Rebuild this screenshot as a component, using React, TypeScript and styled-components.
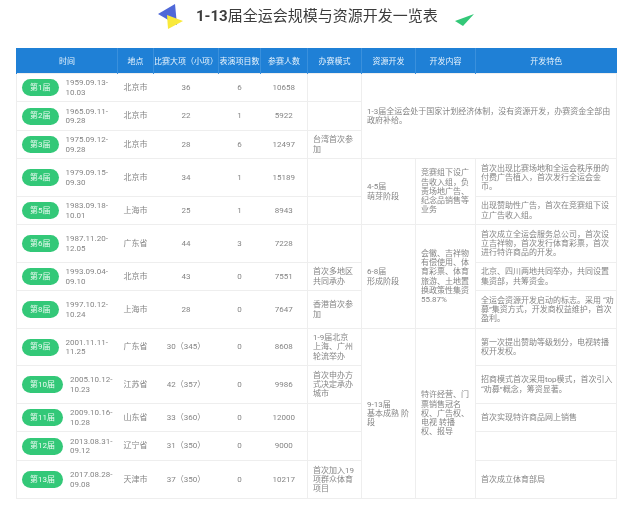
import React from 'react'
import styled, { createGlobalStyle } from 'styled-components'

const GlobalStyle = createGlobalStyle`
  html, body {
    margin: 0;
    padding: 0;
    background: #fff;
    font-family: Roboto, "Noto Sans CJK SC", sans-serif;
  }
`

type Session = {
  name: string
  date: string
  city: string
  events: string
  shows: number
  people: number
  mode?: string
  height: number
}

const sessions: Session[] = [
  { name: '第1届', date: '1959.09.13-10.03', city: '北京市', events: '36', shows: 6, people: 10658, height: 28 },
  { name: '第2届', date: '1965.09.11-09.28', city: '北京市', events: '22', shows: 1, people: 5922, height: 29 },
  { name: '第3届', date: '1975.09.12-09.28', city: '北京市', events: '28', shows: 6, people: 12497, mode: '台湾首次参加', height: 28 },
  { name: '第4届', date: '1979.09.15-09.30', city: '北京市', events: '34', shows: 1, people: 15189, height: 38 },
  { name: '第5届', date: '1983.09.18-10.01', city: '上海市', events: '25', shows: 1, people: 8943, height: 28 },
  { name: '第6届', date: '1987.11.20-12.05', city: '广东省', events: '44', shows: 3, people: 7228, height: 38 },
  { name: '第7届', date: '1993.09.04-09.10', city: '北京市', events: '43', shows: 0, people: 7551, mode: '首次多地区共同承办', height: 28 },
  { name: '第8届', date: '1997.10.12-10.24', city: '上海市', events: '28', shows: 0, people: 7647, mode: '香港首次参加', height: 38 },
  { name: '第9届', date: '2001.11.11-11.25', city: '广东省', events: '30（345）', shows: 0, people: 8608, mode: '1-9届北京上海、广州轮流举办', height: 37 },
  { name: '第10届', date: '2005.10.12-10.23', city: '江苏省', events: '42（357）', shows: 0, people: 9986, mode: '首次申办方式决定承办城市', height: 38 },
  { name: '第11届', date: '2009.10.16-10.28', city: '山东省', events: '33（360）', shows: 0, people: 12000, height: 28 },
  { name: '第12届', date: '2013.08.31-09.12', city: '辽宁省', events: '31（350）', shows: 0, people: 9000, height: 29 },
  { name: '第13届', date: '2017.08.28-09.08', city: '天津市', events: '37（350）', shows: 0, people: 10217, mode: '首次加入19项群众体育项目', height: 38 },
]

// rows 4-13 carry their own 开发特色 text
const features: Record<number, string> = {
  3: '首次出现比赛场地和全运会秩序册的付费广告植入，首次发行全运会金币。',
  4: '出现赞助性广告，首次在竞赛组下设立广告收入组。',
  5: '首次成立全运会服务总公司，首次设立吉祥物，首次发行体育彩票，首次进行特许商品的开发。',
  6: '北京、四川两地共同举办，共同设置集资部，共筹资金。',
  7: '全运会资源开发启动的标志。采用 “劝募”集资方式，开发商权益维护，首次盈利。',
  8: '第一次提出赞助等级划分，电视转播权开发权。',
  9: '招商模式首次采用top模式，首次引入 “劝募”概念，筹资显著。',
  10: '首次实现特许商品网上销售',
  11: '',
  12: '首次成立体育部局',
}

// stages start at a row and span several rows
const stages: Record<number, { span: number; stage: string[]; content: string }> = {
  3: { span: 2, stage: ['4-5届', '萌芽阶段'], content: '竞赛组下设广告收入组，负责场地广告、纪念品销售等业务' },
  5: { span: 3, stage: ['6-8届', '形成阶段'], content: '会徽、吉祥物有偿使用、体育彩票、体育旅游、土地置换政策性集资55.87%' },
  8: { span: 5, stage: ['9-13届', '基本成熟 阶段'], content: '特许经营、门票销售冠名权、广告权、电视 转播权、报导' },
}

const columns = [101, 36, 65, 42, 47, 54, 54, 60, 141]
const headers = ['时间', '地点', '比赛大项（小项）', '表演项目数', '参赛人数', '办赛模式', '资源开发', '开发内容', '开发特色']

const Page = styled.div`
  width: 641px;
  height: 508px;
  overflow: hidden;
  filter: blur(0.45px);
`

const TitleBar = styled.header`
  display: flex;
  align-items: flex-start;
  height: 44px;
  padding: 4px 0 0 158px;
`

const Title = styled.h1`
  margin: 0 17px 0 12px;
  font-size: 15px;
  line-height: 24px;
  font-weight: 400;
  color: #3c3c3c;
  white-space: nowrap;
`

const TitleNumber = styled.span`
  font-weight: 700;
`

const ArrowIcon = styled.svg`
  display: block;
  flex: none;
  margin-top: 10px;
`

const Table = styled.table`
  width: 600px;
  margin-left: 16px;
  border-collapse: collapse;
  table-layout: fixed;
`

const HeadCell = styled.th`
  height: 25px;
  padding: 0;
  background: #1f80d6;
  border-left: 1px solid #3a90dc;
  color: #e8f3fc;
  font-size: 8px;
  font-weight: 400;
  text-align: center;
  white-space: nowrap;
  &:first-child {
    border-left: 1px solid #1f80d6;
  }
`

const Row = styled.tr<{ $height: number }>`
  height: ${(p) => p.$height}px;
`

const Cell = styled.td<{ $center?: boolean; $ruled?: boolean }>`
  padding: 0 ${(p) => (p.$center ? 0 : '2px')} 0 ${(p) => (p.$center ? 0 : p.$ruled ? '5px' : '6px')};
  border-top: 1px solid #eee;
  border-bottom: 1px solid #eee;
  border-left: ${(p) => (p.$ruled ? '1px solid #eee' : 'none')};
  border-right: ${(p) => (p.$ruled ? '1px solid #eee' : 'none')};
  color: #858585;
  font-size: 8px;
  line-height: 9.3px;
  font-weight: 400;
  text-align: ${(p) => (p.$center ? 'center' : 'left')};
  vertical-align: middle;
  word-break: break-all;
`

const NarrowCell = styled(Cell)`
  padding-right: 5px;
`

const FeatureCell = styled(Cell)`
  padding-right: 1px;
`

const TimeCell = styled(Cell)`
  padding: 0 0 0 5px;
  border-left: 1px solid #eee;
`

const TimeWrap = styled.div`
  display: flex;
  align-items: center;
  gap: 7px;
`

const Pill = styled.span`
  display: inline-flex;
  flex: none;
  align-items: center;
  justify-content: center;
  height: 17px;
  padding: 0 8px;
  border-radius: 9px;
  background: #33c878;
  color: #eafaf1;
  font-size: 8px;
  font-weight: 400;
  white-space: nowrap;
`

const DateText = styled.span`
  width: 46px;
  word-break: normal;
`

const StageLine = styled.div``

const App = () => (
  <Page>
    <GlobalStyle />
    <TitleBar>
      <svg width="26" height="26" viewBox="0 0 26 26">
        <polygon points="17,0 0,10 19,21" fill="#4f68d8" />
        <polygon points="9,11 25,17 10,25" fill="#f9e93a" />
      </svg>
      <Title>
        <TitleNumber>1-13</TitleNumber>届全运会规模与资源开发一览表
      </Title>
      <ArrowIcon width="20" height="13" viewBox="0 0 20 13">
        <polygon points="19,0 0,7 8,12" fill="#33c878" />
      </ArrowIcon>
    </TitleBar>
    <Table>
      <colgroup>
        {columns.map((w, i) => (
          <col key={i} style={{ width: w }} />
        ))}
      </colgroup>
      <thead>
        <tr>
          {headers.map((h) => (
            <HeadCell key={h}>{h}</HeadCell>
          ))}
        </tr>
      </thead>
      <tbody>
        {sessions.map((s, i) => (
          <Row key={s.name} $height={s.height}>
            <TimeCell>
              <TimeWrap>
                <Pill>{s.name}</Pill>
                <DateText>{s.date}</DateText>
              </TimeWrap>
            </TimeCell>
            <Cell>{s.city}</Cell>
            <Cell $center>{s.events}</Cell>
            <Cell $center>{s.shows}</Cell>
            <Cell $center>{s.people}</Cell>
            <NarrowCell $ruled>{s.mode}</NarrowCell>
            {i === 0 && (
              <Cell $ruled rowSpan={3} colSpan={3}>
                1-3届全运会处于国家计划经济体制，没有资源开发，办赛资金全部由政府补给。
              </Cell>
            )}
            {stages[i] && (
              <>
                <NarrowCell $ruled rowSpan={stages[i].span}>
                  {stages[i].stage.map((line) => (
                    <StageLine key={line}>{line}</StageLine>
                  ))}
                </NarrowCell>
                <NarrowCell $ruled rowSpan={stages[i].span}>
                  {stages[i].content}
                </NarrowCell>
              </>
            )}
            {i >= 3 && <FeatureCell $ruled>{features[i]}</FeatureCell>}
          </Row>
        ))}
      </tbody>
    </Table>
  </Page>
)

export default App
